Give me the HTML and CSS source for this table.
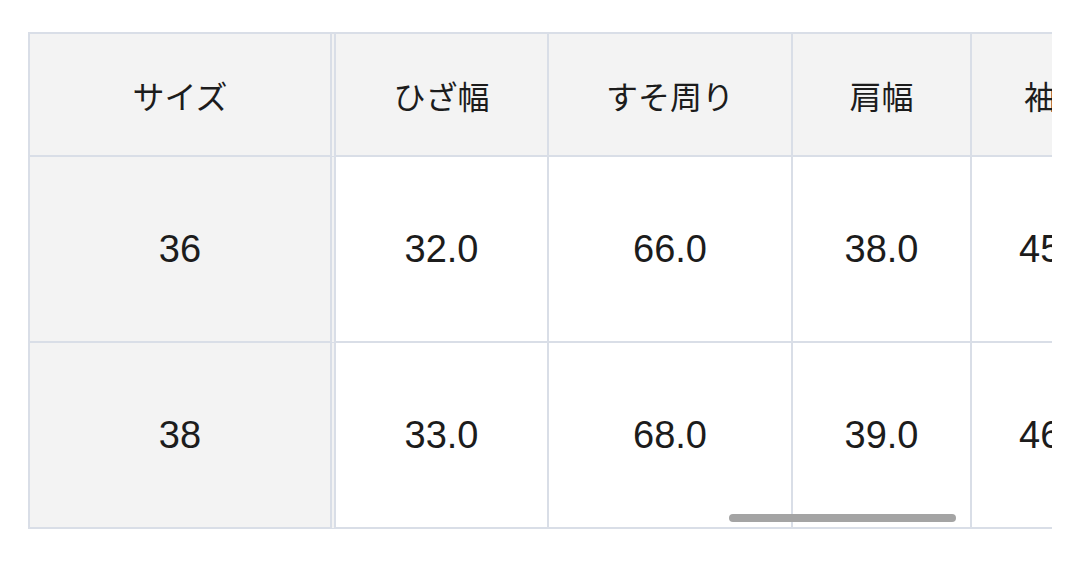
FILE: index.html
```html
<!DOCTYPE html>
<html lang="ja">
<head>
<meta charset="utf-8">
<link rel="stylesheet" href="styles.css">
</head>
<body>
<div class="wrap">
  <div class="scroller">
    <table class="size-table">
      <colgroup>
        <col class="c1"><col class="c2"><col class="c3"><col class="c4"><col class="c5">
      </colgroup>
      <thead>
        <tr>
          <th class="first">サイズ</th>
          <th>ひざ幅</th>
          <th>すそ周り</th>
          <th>肩幅</th>
          <th>袖丈</th>
        </tr>
      </thead>
      <tbody>
        <tr>
          <th class="first num">36</th>
          <td>32.0</td>
          <td>66.0</td>
          <td>38.0</td>
          <td>45.0</td>
        </tr>
        <tr>
          <th class="first num">38</th>
          <td>33.0</td>
          <td>68.0</td>
          <td>39.0</td>
          <td>46.0</td>
        </tr>
      </tbody>
    </table>
  </div>
  <div class="scrollbar"></div>
</div>
</body>
</html>
```
FILE: styles.css
```css
html, body {
  margin: 0;
  padding: 0;
  background: #ffffff;
}

.wrap {
  position: relative;
  margin: 32px 0 0 28px;
  width: 1024px;
}

.scroller {
  width: 1024px;
  overflow: hidden;
}

.size-table {
  border-collapse: separate;
  border-spacing: 0;
  table-layout: fixed;
  width: 1114px;
  border-top: 2px solid #d9dee7;
  border-left: 2px solid #d9dee7;
  color: #1c1c1c;
}

.c1 { width: 306px; }
.c2 { width: 213px; }
.c3 { width: 244px; }
.c4 { width: 179px; }
.c5 { width: 170px; }

.size-table th,
.size-table td {
  padding: 0;
  text-align: center;
  vertical-align: middle;
  border-right: 2px solid #d9dee7;
  border-bottom: 2px solid #d9dee7;
  background: #ffffff;
}

.size-table thead th {
  height: 121px;
  background: #f3f3f3;
  font-family: "Noto Sans CJK JP", "Noto Sans", sans-serif;
  font-size: 32px;
  font-weight: 400;
}

.size-table tbody td,
.size-table tbody th {
  height: 184px;
  font-family: "Liberation Sans", Arial, sans-serif;
  font-size: 38px;
  font-weight: 400;
}

.size-table .first {
  background: #f3f3f3;
  border-right: 6px double #d9dee7;
}

.scrollbar {
  position: absolute;
  left: 701px;
  top: 482px;
  width: 227px;
  height: 8px;
  border-radius: 4px;
  background: #a4a4a4;
}
```
